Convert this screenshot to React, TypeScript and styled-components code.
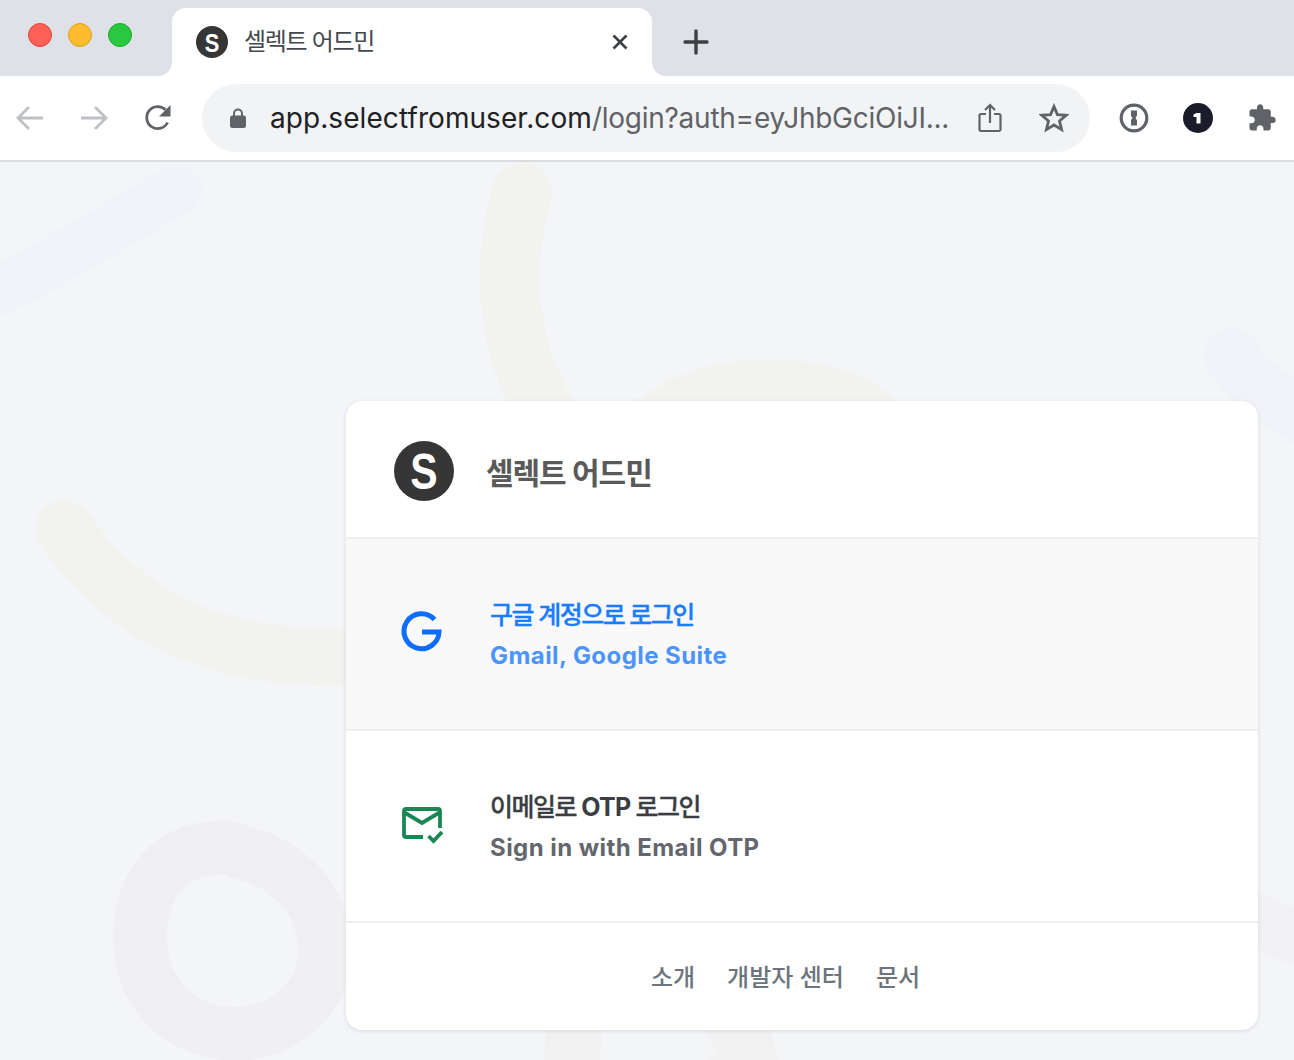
import { createGlobalStyle } from 'styled-components'
import styled from 'styled-components'

const sansStack = `Inter, "Noto Sans CJK KR", "Noto Sans", sans-serif`

const GlobalStyle = createGlobalStyle`
  html, body {
    margin: 0;
    padding: 0;
    background: #f3f5f9;
    font-family: ${sansStack};
  }
  * { box-sizing: border-box; }
`

const Logo = ({ size }: { size: number }) => (
  <svg width={size} height={size} viewBox="0 0 60 60">
    <circle cx="30" cy="30" r="30" fill="#363636" />
    <text transform="translate(30 48) scale(0.82 1)" textAnchor="middle" fontFamily="'Liberation Sans', sans-serif" fontWeight="700" fontSize="50" fill="#fff">S</text>
  </svg>
)

const Background = () => (
  <BackgroundArt viewBox="0 0 1294 900" width="1294" height="900" fill="none" strokeLinecap="round">
    <path d="M177 28 C110 64 50 108 -30 140" stroke="#f2f3f8" strokeWidth="50" />
    <path d="M522 30 C500 110 505 200 565 280" stroke="#f2f3ee" strokeWidth="60" />
    <path d="M615 255 C680 200 730 198 778 198 C830 198 880 215 915 255 Z" fill="#f2f3ee" />
    <path d="M64 367 C130 460 220 500 360 495" stroke="#f2f3ee" strokeWidth="58" />
    <path d="M1232 195 C1250 225 1280 240 1320 265" stroke="#f1f3f8" strokeWidth="56" />
    <path d="M1240 751 L1320 786" stroke="#f1f0f4" strokeWidth="53" strokeLinecap="butt" />
    <path d="M232 686 C170 680 140 725 140 775 C140 840 190 872 235 872 C285 872 325 835 325 790 C325 735 285 700 240 690" stroke="#f0f0f3" strokeWidth="54" />
    <path d="M575 850 L571 910" stroke="#f1f1f1" strokeWidth="56" strokeLinecap="butt" />
    <path d="M695 850 L717 891 L705 900 H780 L764 850 Z" fill="#f1f1f1" />
  </BackgroundArt>
)

export default function App() {
  return (
    <Screen>
      <GlobalStyle />
      <TabStrip>
        <Lights>
          <Light $color="#ff5f57" $edge="#e0443e" />
          <Light $color="#febc2e" $edge="#dea123" />
          <Light $color="#28c840" $edge="#1aab29" />
        </Lights>
        <Tab>
          <Logo size={32} />
          <TabTitle>셀렉트 어드민</TabTitle>
          <TabClose width="20" height="20" viewBox="0 0 20 20">
            <path d="M3.500 3.500 L16.500 16.500 M16.500 3.500 L3.500 16.500" stroke="#3c4043" strokeWidth="2.600" />
          </TabClose>
        </Tab>
        <NewTab width="26" height="26" viewBox="0 0 26 26">
          <path d="M13 2 V24 M2 13 H24" stroke="#3c4043" strokeWidth="3.400" strokeLinecap="round" />
        </NewTab>
      </TabStrip>

      <Toolbar>
        <NavIcons>
          <svg width="30" height="30" viewBox="0 0 30 30" fill="none" stroke="#bdc1c6" strokeWidth="2.800">
            <path d="M28 15 H3 M14 4 L3 15 L14 26" />
          </svg>
          <svg width="30" height="30" viewBox="0 0 30 30" fill="none" stroke="#bdc1c6" strokeWidth="2.800">
            <path d="M2 15 H27 M16 4 L27 15 L16 26" />
          </svg>
          <svg width="30" height="30" viewBox="0 0 30 30" fill="none">
            <path d="M24.600 19.500 A11 11 0 1 1 22.500 6.800" stroke="#5f6368" strokeWidth="2.800" />
            <path d="M27.500 2 V13.500 H16 Z" fill="#5f6368" />
          </svg>
        </NavIcons>
        <Omnibox>
          <svg width="18" height="22" viewBox="0 0 18 22" fill="none">
            <path d="M5 9 V6.500 A4 4 0 0 1 13 6.500 V9" stroke="#5f6368" strokeWidth="2" />
            <rect x="1" y="8.500" width="16" height="12.500" rx="2.500" fill="#5f6368" />
          </svg>
          <Url><b>app.selectfromuser.com</b>/login?auth=eyJhbGciOiJI...</Url>
          <OmniIcons>
            <svg width="24" height="30" viewBox="0 0 24 30" fill="none" stroke="#5f6368" strokeWidth="2.200">
              <path d="M8 11 H3 A1.500 1.500 0 0 0 1.500 12.500 V26.500 A1.500 1.500 0 0 0 3 28 H21 A1.500 1.500 0 0 0 22.500 26.500 V12.500 A1.500 1.500 0 0 0 21 11 H16" />
              <path d="M12 20 V2 M7 7 L12 2 L17 7" />
            </svg>
            <svg width="30" height="30" viewBox="0 0 30 30" fill="none" stroke="#5f6368" strokeWidth="2.800" strokeLinejoin="miter">
              <path d="M15 3.500 L18.400 11.600 L27.200 12.300 L20.500 18 L22.600 26.600 L15 22 L7.400 26.600 L9.500 18 L2.800 12.300 L11.600 11.600 Z" />
            </svg>
          </OmniIcons>
        </Omnibox>
        <Extensions>
          <svg width="30" height="30" viewBox="0 0 30 30">
            <circle cx="15" cy="15" r="12.800" fill="none" stroke="#5f6368" strokeWidth="3.200" />
            <path d="M12 7.500 H18 V12.500 L16.500 15 L18 17.500 V22.500 H12 V17 L13.500 15 L12 13 Z" fill="#5f6368" />
          </svg>
          <svg width="30" height="30" viewBox="0 0 30 30">
            <circle cx="15" cy="15" r="15" fill="#1a1c2a" />
            <path d="M10.500 11.500 L13.500 10 H17.500 V20.500 H13.500 V14 H10.500 Z" fill="#fff" />
          </svg>
          <svg width="30" height="30" viewBox="0 0 24 24">
            <path fill="#5f6368" d="M20.500 11H19V7c0-1.100-.9-2-2-2h-4V3.500C13 2.120 11.880 1 10.500 1S8 2.120 8 3.500V5H4c-1.100 0-1.990.9-1.990 2v3.800H3.500c1.490 0 2.700 1.210 2.700 2.700s-1.210 2.700-2.700 2.700H2V20c0 1.100.9 2 2 2h3.800v-1.500c0-1.490 1.210-2.700 2.700-2.700 1.490 0 2.700 1.210 2.700 2.700V22H17c1.100 0 2-.9 2-2v-4h1.500c1.380 0 2.500-1.120 2.500-2.500S21.880 11 20.500 11z" />
          </svg>
        </Extensions>
      </Toolbar>

      <Page>
        <Background />
        <Card>
          <CardHeader>
            <Logo size={60} />
            <BrandName>셀렉트 어드민</BrandName>
          </CardHeader>
          <LoginRow $tint>
            <RowIcon>
              <svg width="40" height="40" viewBox="0 0 40 40" fill="none">
                <path d="M32.500 7.500 A17.500 17.500 0 1 0 37 20 H20" stroke="#0d6efd" strokeWidth="5" />
              </svg>
            </RowIcon>
            <RowText>
              <RowTitle $color="#1a7cff">구글 계정으로 로그인</RowTitle>
              <RowSub $color="#4d94fa">Gmail, Google Suite</RowSub>
            </RowText>
          </LoginRow>
          <LoginRow>
            <RowIcon>
              <svg width="40" height="40" viewBox="0 0 40 40" fill="none" stroke="#198754">
                <path d="M21 33 H4 A2 2 0 0 1 2 31 V7 A2 2 0 0 1 4 5 H36 A2 2 0 0 1 38 7 V24" strokeWidth="3.800" />
                <path d="M2.500 8.500 L20 19 L37.500 8.500" strokeWidth="3.800" />
                <path d="M26.500 32 L31.500 37 L40 28" strokeWidth="3.800" />
              </svg>
            </RowIcon>
            <RowText>
              <RowTitle $color="#3a3d42">이메일로 <Latin>OTP</Latin> 로그인</RowTitle>
              <RowSub $color="#63676d">Sign in with Email OTP</RowSub>
            </RowText>
          </LoginRow>
          <CardFooter>
            <FooterLink>소개</FooterLink>
            <FooterLink>개발자 센터</FooterLink>
            <FooterLink>문서</FooterLink>
          </CardFooter>
        </Card>
      </Page>
    </Screen>
  )
}

const Screen = styled.div`
  width: 1294px;
  height: 1060px;
  overflow: hidden;
  display: flex;
  flex-direction: column;
`

const TabStrip = styled.div`
  height: 76px;
  flex: none;
  background: #dee1e6;
  display: flex;
  align-items: flex-start;
  padding: 8px 0 0 28px;
`

const Lights = styled.div`
  display: flex;
  gap: 16px;
  padding-top: 15px;
  width: 144px;
`

const Light = styled.span<{ $color: string; $edge: string }>`
  width: 24px;
  height: 24px;
  border-radius: 50%;
  background: ${props => props.$color};
  border: 1px solid ${props => props.$edge};
`

const Tab = styled.div`
  position: relative;
  width: 480px;
  height: 68px;
  background: #fff;
  border-radius: 14px 14px 0 0;
  display: flex;
  align-items: center;
  padding: 0 22px 0 24px;

  &::before,
  &::after {
    content: '';
    position: absolute;
    bottom: 0;
    width: 14px;
    height: 14px;
  }

  &::before {
    left: -14px;
    background: radial-gradient(circle at 0 0, #dee1e6 13.5px, #fff 14.5px);
  }

  &::after {
    right: -14px;
    background: radial-gradient(circle at 100% 0, #dee1e6 13.5px, #fff 14.5px);
  }
`

const TabTitle = styled.span`
  margin-left: 16px;
  flex: 1;
  font-size: 24px;
  line-height: 32px;
  color: #45484d;
  letter-spacing: -1.3px;
`

const TabClose = styled.svg`
  flex: none;
`

const NewTab = styled.svg`
  margin: 21px 0 0 31px;
`

const Toolbar = styled.div`
  height: 86px;
  flex: none;
  background: #fff;
  border-bottom: 2px solid #dadce0;
  display: flex;
  align-items: center;
  padding: 0 16px 0 15px;
`

const NavIcons = styled.div`
  display: flex;
  gap: 34px;
  width: 187px;
`

const Omnibox = styled.div`
  width: 888px;
  height: 68px;
  border-radius: 34px;
  background: #f1f3f4;
  display: flex;
  align-items: center;
  padding: 0 21px 0 27px;
`

const Url = styled.div`
  margin-left: 23px;
  flex: 1;
  font-family: Inter, Roboto, sans-serif;
  font-size: 28px;
  letter-spacing: -0.25px;
  color: #5f6368;
  white-space: nowrap;
  overflow: hidden;

  b {
    font-weight: 400;
    color: #202124;
    letter-spacing: 0.07px;
  }
`

const OmniIcons = styled.div`
  display: flex;
  align-items: center;
  gap: 37px;
  margin-left: 14px;
`

const Extensions = styled.div`
  display: flex;
  gap: 34px;
  margin-left: 29px;
`

const Page = styled.main`
  flex: 1;
  position: relative;
  overflow: hidden;
  background: #f3f5f9;
  padding: 239px 36px 0 346px;
`

const BackgroundArt = styled.svg`
  position: absolute;
  left: 0;
  top: 0;
`

const Card = styled.section`
  position: relative;
  width: 912px;
  height: 629px;
  background: #fff;
  border-radius: 16px;
  overflow: hidden;
  box-shadow: 0 1px 4px rgba(60, 64, 90, 0.14);
  display: flex;
  flex-direction: column;
`

const CardHeader = styled.header`
  height: 138px;
  flex: none;
  display: flex;
  align-items: center;
  padding: 4px 48px 0;
  border-bottom: 2px solid #eeeeef;
`

const BrandName = styled.h1`
  margin: 0 0 0 32px;
  font-size: 30px;
  font-weight: 600;
  letter-spacing: -1.07px;
  color: #5a5a5a;
`

const LoginRow = styled.div<{ $tint?: boolean }>`
  height: 192px;
  flex: none;
  display: flex;
  align-items: center;
  padding: 0 0 0 56px;
  border-bottom: 2px solid #eeeeef;
  background: ${props => (props.$tint ? '#f9f9fa' : '#fff')};
`

const RowIcon = styled.div`
  width: 40px;
  height: 40px;
  margin: 0 48px 4px 0;
  flex: none;

  svg {
    display: block;
    overflow: visible;
  }
`

const RowText = styled.div`
  display: flex;
  flex-direction: column;
  gap: 9px;
  padding-top: 2px;
`

const RowTitle = styled.div<{ $color: string }>`
  font-size: 25px;
  line-height: 32px;
  font-weight: 500;
  letter-spacing: -1.5px;
  -webkit-text-stroke: 0.3px ${props => props.$color};
  color: ${props => props.$color};
`

const Latin = styled.span`
  font-weight: 700;
  letter-spacing: -0.7px;
  -webkit-text-stroke: 0;
`

const RowSub = styled.div<{ $color: string }>`
  font-size: 24px;
  line-height: 32px;
  font-weight: 650;
  letter-spacing: 0.44px;
  color: ${props => props.$color};
`

const CardFooter = styled.footer`
  flex: 1;
  display: flex;
  justify-content: center;
  align-items: center;
  gap: 32px;
  padding: 0 33px 2px 0;
`

const FooterLink = styled.a`
  font-size: 24px;
  font-weight: 500;
  letter-spacing: 0;
  color: #6c757d;
`
